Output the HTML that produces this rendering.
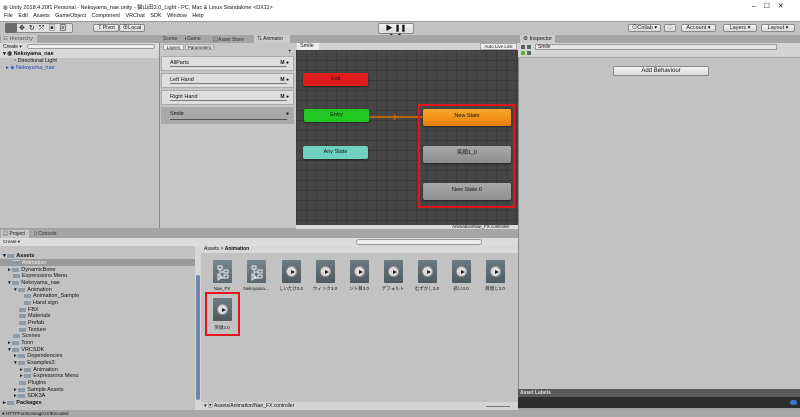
<!DOCTYPE html>
<html><head><meta charset="utf-8"><style>
*{margin:0;padding:0;box-sizing:border-box}
body{width:800px;height:417px;overflow:hidden;background:#a2a2a2;font-family:"Liberation Sans","Noto Sans CJK JP",sans-serif;font-size:5.5px;color:#111;position:relative}
.a{position:absolute}
.t{white-space:nowrap}
.btn{position:absolute;background:linear-gradient(#f4f4f4,#d8d8d8);border:1px solid #8a8a8a;border-radius:2px;font-size:5.5px;text-align:center;line-height:7px}
.st{position:absolute;border-radius:2px;text-align:center;font-size:5.5px;box-shadow:0 1px 2px #222}
.fold{display:inline-block;width:7px;height:5px;background:#8e9aa6;margin-right:2px;vertical-align:-1px;border-top:1px solid #c0c8d0}
.tr{position:absolute;font-size:5.5px;white-space:nowrap;line-height:10px}
.ic{position:absolute;width:19px;height:23px;background:linear-gradient(#6c7a82,#4e5a60);border-radius:1px}
.ic .p{position:absolute;left:4px;top:6px;width:11px;height:11px;border-radius:50%;background:#ddd;border:1px solid #999}
.ic .p:after{content:"";position:absolute;left:4px;top:2.5px;border-left:4px solid #222;border-top:2.5px solid transparent;border-bottom:2.5px solid transparent}
.lb{position:absolute;font-size:4.5px;width:34px;text-align:center;white-space:nowrap}
.li{position:absolute;left:161px;width:133px;height:15px;background:#dedede;border:1px solid #aaa}
.li span{position:absolute;left:8px;top:3px}
.li i{position:absolute;left:8px;right:6px;bottom:3px;height:1px;background:#777}
</style></head><body>
<div class="a" style="left:0;top:0;width:800px;height:21px;background:#fff"></div>
<div class="a t" style="left:3px;top:3px;font-size:5.5px">◍ Unity 2018.4.20f1 Personal - Nekoyama_nae.unity - 猫山田3.0_Light - PC, Mac &amp; Linux Standalone &lt;DX11&gt;</div>
<div class="a t" style="left:752px;top:2px;font-size:7px">–&nbsp;&nbsp;&nbsp;&nbsp;☐&nbsp;&nbsp;&nbsp;&nbsp;✕</div>
<div class="a t" style="left:4px;top:13px;font-size:5.5px;word-spacing:4px">File Edit Assets GameObject Component VRChat&nbsp;SDK Window Help</div>
<div class="a" style="left:0;top:21px;width:800px;height:14px;background:#c2c2c2;border-top:1px solid #999"></div>
<div class="btn" style="left:5px;top:23px;width:68px;height:10px;background:#e0e0e0"></div>
<div class="a" style="left:5px;top:23px;width:12px;height:10px;background:#6b6b6b;border-radius:2px"></div>
<div class="a t" style="left:19px;top:23px;font-size:7px;letter-spacing:4px">✥↻⤧▣⊠</div>
<div class="btn" style="left:93px;top:24px;width:26px;height:8px">⁑Pivot</div>
<div class="btn" style="left:119px;top:24px;width:26px;height:8px">⊕Local</div>
<div class="btn" style="left:378px;top:23px;width:36px;height:11px;font-size:7px;line-height:9px">▶ ❚❚ ▶❚</div>
<div class="btn" style="left:628px;top:24px;width:33px;height:8px">⊙Collab ▾</div>
<div class="btn" style="left:664px;top:24px;width:12px;height:8px">☁</div>
<div class="btn" style="left:681px;top:24px;width:35px;height:8px">Account ▾</div>
<div class="btn" style="left:723px;top:24px;width:34px;height:8px">Layers ▾</div>
<div class="btn" style="left:761px;top:24px;width:34px;height:8px">Layout ▾</div>
<div class="a" style="left:0;top:35px;width:159px;height:8px;background:#a5a5a5"></div>
<div class="a t" style="left:1px;top:35px;width:36px;height:8px;background:#c8c8c8;padding-left:2px;line-height:8px;color:#555">☷ Hierarchy</div>
<div class="a" style="left:0;top:43px;width:159px;height:185px;background:#c2c2c2"></div>
<div class="a" style="left:0;top:43px;width:159px;height:7px;background:#dcdcdc"></div>
<div class="a t" style="left:3px;top:44px;font-size:5px">Create ▾</div>
<div class="a" style="left:27px;top:44px;width:128px;height:5px;border:1px solid #999;border-radius:3px;background:#eee"></div>
<div class="a" style="left:0;top:50px;width:159px;height:8px;background:#d8d8d8"></div>
<div class="tr" style="left:3px;top:49px;font-weight:bold">▾ ◍ Nekoyama_nae</div>
<div class="tr" style="left:14px;top:56px">▫ Directional Light</div>
<div class="tr" style="left:6px;top:63px;color:#1b4dbf">▸ ◈ Nekoyama_nae</div>
<div class="a" style="left:159px;top:35px;width:359px;height:8px;background:#a5a5a5"></div>
<div class="a t" style="left:163px;top:36px;font-size:5px;color:#333">Scene</div>
<div class="a t" style="left:184px;top:36px;font-size:5px;color:#333">◖Game</div>
<div class="a t" style="left:213px;top:36px;font-size:5px;color:#333">▤Asset Store</div>
<div class="a t" style="left:254px;top:35px;width:36px;height:8px;background:#cbcbcb;line-height:8px;padding-left:3px;font-size:5px">⇅ Animator</div>
<div class="a" style="left:159px;top:43px;width:137px;height:185px;background:#c6c6c6;border-left:1px solid #888"></div>
<div class="a t" style="left:163px;top:44px;width:21px;height:6px;background:#ececec;border:1px solid #aaa;font-size:4.5px;line-height:5px;text-align:center">Layers</div>
<div class="a t" style="left:185px;top:44px;width:29px;height:6px;background:#ddd;border:1px solid #aaa;font-size:4.5px;line-height:5px;text-align:center">Parameters</div>
<div class="a t" style="left:288px;top:49px;font-size:6px">+</div>
<div class="li" style="top:56px"><span>AllParts</span><b class="a" style="right:4px;top:3px;font-size:5px">M ●</b><i></i></div>
<div class="li" style="top:73px"><span>Left Hand</span><b class="a" style="right:4px;top:3px;font-size:5px">M ●</b><i></i></div>
<div class="li" style="top:90px"><span>Right Hand</span><b class="a" style="right:4px;top:3px;font-size:5px">M ●</b><i></i></div>
<div class="li" style="top:107px;background:#a9a9a9;height:17px"><span>Smile</span><b class="a" style="right:4px;top:3px;font-size:5px">●</b><i style="background:#555"></i></div>
<div class="a" style="left:296px;top:43px;width:222px;height:7px;background:#d2d2d2"></div>
<div class="a t" style="left:297px;top:43px;width:22px;height:7px;background:#eee;line-height:7px;padding-left:3px">Smile</div>
<div class="a t" style="left:480px;top:43px;width:37px;height:7px;background:#eee;border:1px solid #aaa;font-size:4.5px;line-height:5px;text-align:center">Auto Live Link</div>
<div class="a" style="left:296px;top:50px;width:222px;height:175px;background-color:#464646;background-image:linear-gradient(#3c3c3c 1px,transparent 1px),linear-gradient(90deg,#3c3c3c 1px,transparent 1px);background-size:10px 10px"></div>
<div class="a" style="left:296px;top:225px;width:222px;height:4px;background:#dcdcdc"></div>
<div class="a t" style="left:452px;top:224px;font-size:4.5px">Animation/Nae_FX.controller</div>
<div class="st" style="left:303px;top:73px;width:65px;height:13px;background:#e01c1c;line-height:13px">Exit</div>
<div class="a" style="left:368px;top:116px;width:55px;height:2px;background:#b8640a"></div>
<div class="a" style="left:394px;top:114px;border-left:4px solid #b8640a;border-top:3px solid transparent;border-bottom:3px solid transparent"></div>
<div class="st" style="left:304px;top:109px;width:65px;height:13px;background:#22c822;line-height:13px">Entry</div>
<div class="st" style="left:303px;top:146px;width:65px;height:13px;background:#6fd1c0;line-height:13px">Any State</div>
<div class="st" style="left:423px;top:109px;width:88px;height:17px;background:linear-gradient(#f9a730,#e67d00);line-height:15px">New State</div>
<div class="st" style="left:423px;top:146px;width:88px;height:17px;background:linear-gradient(#a9a9a9,#8e8e8e);line-height:15px">笑顔1_0</div>
<div class="st" style="left:423px;top:183px;width:88px;height:17px;background:linear-gradient(#a9a9a9,#8e8e8e);line-height:15px">New State 0</div>
<div class="a" style="left:418px;top:104px;width:97px;height:104px;border:2px solid #e4151b"></div>
<div class="a" style="left:518px;top:35px;width:282px;height:8px;background:#a5a5a5"></div>
<div class="a t" style="left:520px;top:35px;width:35px;height:8px;background:#cbcbcb;line-height:8px;padding-left:3px">⚙ Inspector</div>
<div class="a" style="left:518px;top:43px;width:282px;height:346px;background:#c2c2c2;border-left:1px solid #888"></div>
<div class="a" style="left:518px;top:43px;width:282px;height:15px;background:#d4d4d4;border-bottom:1px solid #a0a0a0"></div>
<div class="a" style="left:521px;top:45px;width:4px;height:4px;background:#566"></div>
<div class="a" style="left:527px;top:45px;width:4px;height:4px;background:#566"></div>
<div class="a" style="left:521px;top:51px;width:4px;height:4px;background:#6a3"></div>
<div class="a" style="left:527px;top:51px;width:4px;height:4px;background:#566"></div>
<div class="a t" style="left:535px;top:44px;width:242px;height:6px;background:#e6e6e6;border:1px solid #999;font-size:5px;line-height:4px;padding-left:2px">Smile</div>
<div class="btn" style="left:613px;top:66px;width:96px;height:10px;line-height:8px;font-size:6px">Add Behaviour</div>
<div class="a t" style="left:518px;top:389px;width:282px;height:8px;background:#5a5a5a;color:#ddd;font-weight:bold;line-height:8px;padding-left:2px;font-size:5px">Asset Labels</div>
<div class="a" style="left:518px;top:397px;width:282px;height:11px;background:#2d2d2d"></div>
<div class="a" style="left:790px;top:400px;width:7px;height:5px;border-radius:3px;background:#3a77c9"></div>
<div class="a" style="left:0;top:229px;width:518px;height:9px;background:#a5a5a5"></div>
<div class="a t" style="left:1px;top:230px;width:28px;height:8px;background:#c8c8c8;line-height:8px;padding-left:2px;font-size:5px">▤ Project</div>
<div class="a t" style="left:34px;top:230px;line-height:8px;font-size:5px;color:#333">▯ Console</div>
<div class="a" style="left:0;top:238px;width:518px;height:8px;background:#dcdcdc"></div>
<div class="a t" style="left:3px;top:239px;font-size:4.5px">Create ▾</div>
<div class="a" style="left:356px;top:239px;width:126px;height:6px;border:1px solid #999;border-radius:3px;background:#eee"></div>
<div class="a" style="left:0;top:246px;width:195px;height:164px;background:#c2c2c2"></div>
<div class="a" style="left:0;top:259px;width:195px;height:7px;background:#9a9a9a"></div>
<div class="a" style="left:195px;top:246px;width:6px;height:164px;background:#d6d6d6"></div>
<div class="a" style="left:196px;top:275px;width:4px;height:125px;background:#6f86a6;border-radius:2px"></div>
<div class="tr" style="left:3px;top:251px;font-weight:bold">▾ <span class="fold"></span>Assets</div>
<div class="tr" style="left:13px;top:258px;color:#eee"><span class="fold"></span>Animation</div>
<div class="tr" style="left:8px;top:265px">▸ <span class="fold"></span>DynamicBone</div>
<div class="tr" style="left:13px;top:271px"><span class="fold"></span>Expressions Menu</div>
<div class="tr" style="left:8px;top:278px">▾ <span class="fold"></span>Nekoyama_nae</div>
<div class="tr" style="left:14px;top:285px">▾ <span class="fold"></span>Animation</div>
<div class="tr" style="left:24px;top:291px"><span class="fold"></span>Animation_Sample</div>
<div class="tr" style="left:24px;top:298px"><span class="fold"></span>Hand sign</div>
<div class="tr" style="left:19px;top:305px"><span class="fold"></span>FBX</div>
<div class="tr" style="left:19px;top:311px"><span class="fold"></span>Materials</div>
<div class="tr" style="left:19px;top:318px"><span class="fold"></span>Prefab</div>
<div class="tr" style="left:19px;top:325px"><span class="fold"></span>Texture</div>
<div class="tr" style="left:13px;top:331px"><span class="fold"></span>Scenes</div>
<div class="tr" style="left:8px;top:338px">▸ <span class="fold"></span>Toon</div>
<div class="tr" style="left:8px;top:345px">▾ <span class="fold"></span>VRCSDK</div>
<div class="tr" style="left:14px;top:351px">▸ <span class="fold"></span>Dependencies</div>
<div class="tr" style="left:14px;top:358px">▾ <span class="fold"></span>Examples3</div>
<div class="tr" style="left:20px;top:365px">▸ <span class="fold"></span>Animation</div>
<div class="tr" style="left:20px;top:371px">▸ <span class="fold"></span>Expressions Menu</div>
<div class="tr" style="left:19px;top:378px"><span class="fold"></span>Plugins</div>
<div class="tr" style="left:14px;top:385px">▸ <span class="fold"></span>Sample Assets</div>
<div class="tr" style="left:14px;top:391px">▸ <span class="fold"></span>SDK3A</div>
<div class="tr" style="left:3px;top:398px;font-weight:bold">▸ <span class="fold"></span>Packages</div>
<div class="a" style="left:201px;top:246px;width:317px;height:164px;background:#c2c2c2"></div>
<div class="a" style="left:201px;top:246px;width:317px;height:7px;background:#d8d8d8"></div>
<div class="a t" style="left:204px;top:246px;font-size:5px;line-height:7px">Assets &gt; <b>Animation</b></div>
<div class="ic" style="left:213px;top:260px;background:linear-gradient(#7a888e,#5a666c)"><svg width="19" height="23" style="position:absolute;left:0;top:0"><path d="M5 6h4v3H5zM11 10h4v3h-4zM11 15h4v3h-4zM7 9v9h4M7 12h4M5 14l4 3-4 3z" fill="none" stroke="#eee" stroke-width="1"/></svg></div>
<div class="ic" style="left:247px;top:260px;background:linear-gradient(#7a888e,#5a666c)"><svg width="19" height="23" style="position:absolute;left:0;top:0"><path d="M5 6h4v3H5zM11 10h4v3h-4zM11 15h4v3h-4zM7 9v9h4M7 12h4M5 14l4 3-4 3z" fill="none" stroke="#eee" stroke-width="1"/></svg></div>
<div class="ic" style="left:282px;top:260px"><div class="p"></div></div>
<div class="ic" style="left:316px;top:260px"><div class="p"></div></div>
<div class="ic" style="left:350px;top:260px"><div class="p"></div></div>
<div class="ic" style="left:384px;top:260px"><div class="p"></div></div>
<div class="ic" style="left:418px;top:260px"><div class="p"></div></div>
<div class="ic" style="left:452px;top:260px"><div class="p"></div></div>
<div class="ic" style="left:486px;top:260px"><div class="p"></div></div>
<div class="lb" style="left:205px;top:286px">Nae_FX</div>
<div class="lb" style="left:239px;top:286px">Nekoyama...</div>
<div class="lb" style="left:274px;top:286px">しいたけ3.0</div>
<div class="lb" style="left:308px;top:286px">ウィンク3.0</div>
<div class="lb" style="left:342px;top:286px">ジト目3.0</div>
<div class="lb" style="left:376px;top:286px">デフォルト</div>
<div class="lb" style="left:410px;top:286px">むずかし3.0</div>
<div class="lb" style="left:444px;top:286px">悲い3.0</div>
<div class="lb" style="left:478px;top:286px">目閉じ3.0</div>
<div class="ic" style="left:213px;top:298px"><div class="p"></div></div>
<div class="lb" style="left:205px;top:325px">笑顔3.0</div>
<div class="a" style="left:205px;top:292px;width:35px;height:44px;border:2px solid #e4151b"></div>
<div class="a" style="left:201px;top:402px;width:317px;height:8px;background:#d4d4d4"></div>
<div class="a t" style="left:204px;top:402px;font-size:5px;line-height:8px">▾ ▣ Assets/Animation/Nae_FX.controller</div>
<div class="a" style="left:486px;top:406px;width:24px;height:1px;background:#777"></div>
<div class="a" style="left:0;top:410px;width:800px;height:7px;background:#a8a8a8"></div>
<div class="a t" style="left:2px;top:410px;font-size:4.5px;line-height:7px">● HTTPFormUseage:UrlEncoded</div>
</body></html>
